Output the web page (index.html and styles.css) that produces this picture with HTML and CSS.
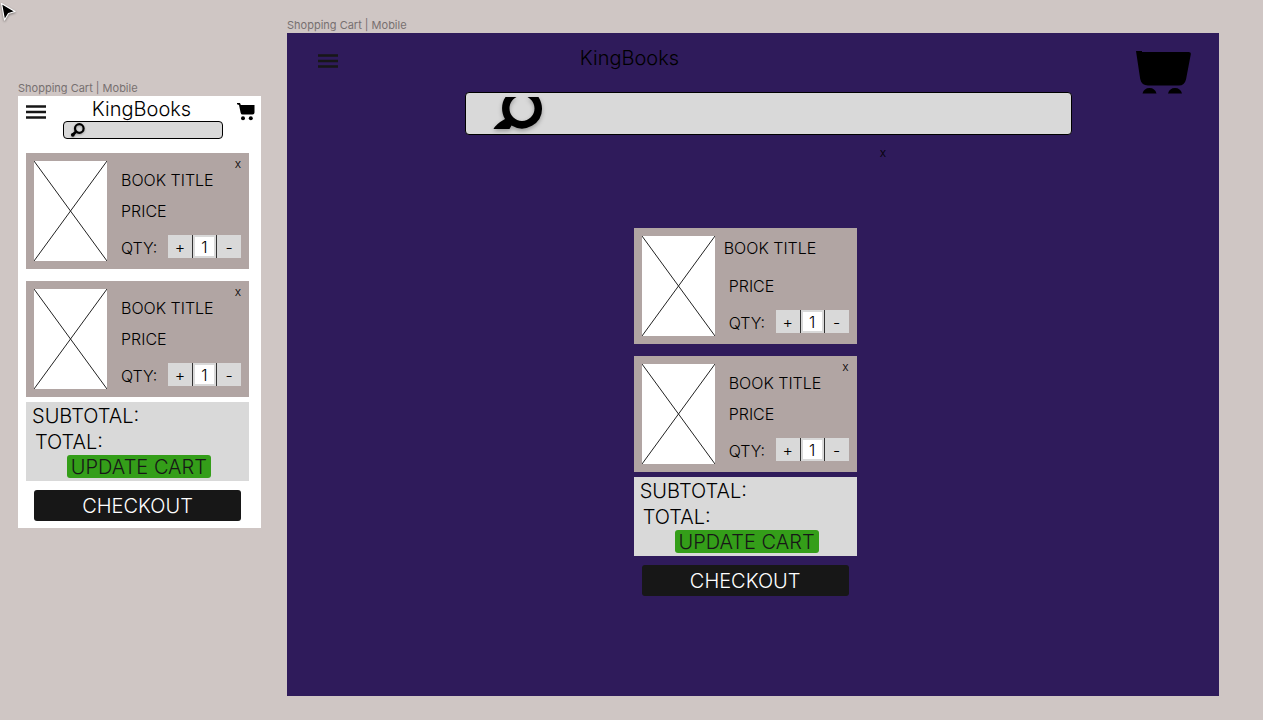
FILE: index.html
```html
<!DOCTYPE html>
<html lang="en">
<head>
<meta charset="utf-8">
<meta name="viewport" content="width=device-width, initial-scale=1">
<title>Shopping Cart</title>
<link rel="stylesheet" href="styles.css">
</head>
<body>
<svg class="pointer" viewBox="0 0 18 22" aria-hidden="true"><path d="M1.5 3.5 15 11.5 8.5 13.5 4.500 20Z" fill="#000" stroke="#fff" stroke-width="1.200" stroke-linejoin="round"/></svg>
<main class="canvas">
  <section class="board board-mobile">
    <h2 class="board-label">Shopping Cart | Mobile</h2>
    <div class="frame">
      <header class="top">
        <button class="icon-button" aria-label="Menu"><svg class="menu-icon" viewBox="0 0 20 24"><path d="M0 9.500h20M0 15h20M0 20.500h20" stroke="#171717" stroke-width="2.400"/></svg></button>
        <h1 class="brand">KingBooks</h1>
        <button class="icon-button" aria-label="Cart"><svg class="cart-icon" viewBox="0 0 18 24"><path d="M0 6h3l.8 2H17.500v7.500q0 2-2 2H5.500q-1.500 0-1.800-1.500L2 8 0 7.200Z"/><circle cx="6" cy="21.200" r="2"/><circle cx="13.800" cy="21.200" r="2"/></svg></button>
      </header>
      <form class="search" role="search">
        <label for="search-mobile"><svg class="search-icon" viewBox="0 0 16 16"><circle cx="9.300" cy="6.500" r="4.300" fill="none" stroke="#000" stroke-width="2.200"/><path d="M6 9.800 3 12.500" stroke="#000" stroke-width="2.600"/><circle cx="2.800" cy="12.800" r="1.900"/></svg></label>
        <input id="search-mobile" type="search" aria-label="Search books">
      </form>
      <div class="cart">
        <article class="item">
          <svg class="cover" viewBox="0 0 73 100" preserveAspectRatio="none" role="img" aria-label="Book cover"><path d="M0 0 73 100M73 0 0 100"/></svg>
          <div class="details">
            <h3>BOOK TITLE</h3>
            <p>PRICE</p>
            <div class="quantity"><label for="qty-1">QTY:</label><div class="stepper"><button aria-label="Add one">+</button><input id="qty-1" type="text" inputmode="numeric" value="1"><button aria-label="Remove one">-</button></div></div>
          </div>
          <button class="remove" aria-label="Remove book">x</button>
        </article>
        <article class="item">
          <svg class="cover" viewBox="0 0 73 100" preserveAspectRatio="none" role="img" aria-label="Book cover"><path d="M0 0 73 100M73 0 0 100"/></svg>
          <div class="details">
            <h3>BOOK TITLE</h3>
            <p>PRICE</p>
            <div class="quantity"><label for="qty-2">QTY:</label><div class="stepper"><button aria-label="Add one">+</button><input id="qty-2" type="text" inputmode="numeric" value="1"><button aria-label="Remove one">-</button></div></div>
          </div>
          <button class="remove" aria-label="Remove book">x</button>
        </article>
        <section class="summary">
          <p class="subtotal">SUBTOTAL:</p>
          <p class="total">TOTAL:</p>
          <button class="update">UPDATE CART</button>
        </section>
        <button class="checkout">CHECKOUT</button>
      </div>
    </div>
  </section>

  <section class="board board-desktop">
    <h2 class="board-label">Shopping Cart | Mobile</h2>
    <div class="frame">
      <header class="top">
        <button class="icon-button" aria-label="Menu"><svg class="menu-icon" viewBox="0 0 20 24"><path d="M0 9.500h20M0 15h20M0 20.500h20" stroke="#171717" stroke-width="2.400"/></svg></button>
        <h1 class="brand">KingBooks</h1>
        <button class="icon-button" aria-label="Cart"><svg class="cart-icon" viewBox="0 0 55 48"><path d="M0 5h6v1H52.500q2.500 0 2.300 2.300L50 33.500q-1.500 6-7 6H12q-6.500 0-7.800-6.500Z"/><path d="M6.500 47.500q1.500-5.500 7-5.500t7 5.500ZM32 47.500q1.500-5.500 7-5.500t7 5.500Z"/></svg></button>
      </header>
      <form class="search" role="search">
        <label for="search-desktop"><svg class="search-icon" viewBox="0 0 52 38"><path fill-rule="evenodd" d="M12.500 2H23.500C18 5 16.500 10 16.500 13.500a12.500 12.500 0 0 0 25 0C41.500 9 39.500 5 34.500 2H45.500C48 6 49 10 49 13.500A20 19.500 0 0 1 18.500 30.500L16.500 34H0.500Q3 29 12 24C8 17 8 8.500 12.500 2Z"/></svg></label>
        <input id="search-desktop" type="search" aria-label="Search books">
      </form>
      <div class="clear-row"><button class="clear" aria-label="Remove book">x</button></div>
      <div class="cart">
        <article class="item item-raised">
          <svg class="cover" viewBox="0 0 73 100" preserveAspectRatio="none" role="img" aria-label="Book cover"><path d="M0 0 73 100M73 0 0 100"/></svg>
          <div class="details">
            <h3>BOOK TITLE</h3>
            <p>PRICE</p>
            <div class="quantity"><label for="qty-3">QTY:</label><div class="stepper"><button aria-label="Add one">+</button><input id="qty-3" type="text" inputmode="numeric" value="1"><button aria-label="Remove one">-</button></div></div>
          </div>
        </article>
        <article class="item">
          <svg class="cover" viewBox="0 0 73 100" preserveAspectRatio="none" role="img" aria-label="Book cover"><path d="M0 0 73 100M73 0 0 100"/></svg>
          <div class="details">
            <h3>BOOK TITLE</h3>
            <p>PRICE</p>
            <div class="quantity"><label for="qty-4">QTY:</label><div class="stepper"><button aria-label="Add one">+</button><input id="qty-4" type="text" inputmode="numeric" value="1"><button aria-label="Remove one">-</button></div></div>
          </div>
          <button class="remove" aria-label="Remove book">x</button>
        </article>
        <section class="summary">
          <p class="subtotal">SUBTOTAL:</p>
          <p class="total">TOTAL:</p>
          <button class="update">UPDATE CART</button>
        </section>
        <button class="checkout">CHECKOUT</button>
      </div>
    </div>
  </section>
</main>
</body>
</html>
```
FILE: styles.css
```css
* { box-sizing: border-box; }

body {
  margin: 0;
  background: #cfc6c4;
  color: #000;
  font-family: Inter, "Liberation Sans", sans-serif;
  font-size: 15px;
  font-weight: 350;
}

h1, h2, h3, p { margin: 0; font-weight: inherit; }

button, input {
  margin: 0;
  padding: 0;
  border: 0;
  background: none;
  color: inherit;
  font: inherit;
}

svg { display: block; }

.pointer {
  position: absolute;
  top: 0;
  left: 0;
  width: 18px;
  height: 22px;
  filter: drop-shadow(0 1px 1px rgba(0, 0, 0, 0.4));
}

.canvas {
  display: grid;
  grid-template-columns: 243px 1fr;
  align-items: start;
  gap: 26px;
  padding: 17px 44px 24px 18px;
}

.board-mobile { padding-top: 63px; }

.board-label {
  color: #777070;
  font-size: 11px;
  font-weight: 400;
  line-height: 16px;
}

.frame { background: #fff; }

.board-mobile .frame { padding: 1px 0 7px; }

.board-desktop .frame {
  min-height: 663px;
  background: #2f1b5b;
}

.top {
  display: grid;
  grid-template-columns: 20px 1fr auto;
  align-items: start;
  padding: 0 6px 0 8px;
}

.board-desktop .top {
  height: 59px;
  padding: 13px 28px 0 31px;
}

.brand {
  font-size: 20px;
  line-height: 24px;
  text-align: center;
}

.board-desktop .brand {
  padding-left: 30.3%;
  text-align: left;
}

.menu-icon { width: 20px; height: 24px; }
.cart-icon { width: 18px; height: 24px; }
.board-desktop .cart-icon { width: 55px; height: 48px; }

.search {
  display: flex;
  align-items: center;
  height: 18px;
  margin: 0 38px 0 45px;
  padding-left: 6px;
  border: 1px solid #000;
  border-radius: 4px;
  background: #d9d9d9;
}

.board-desktop .search {
  height: 43px;
  margin: 0 15.8% 0 19.1%;
  padding-left: 27px;
}

.search input {
  flex: 1;
  min-width: 0;
  height: 100%;
  outline: 0;
}

.search-icon {
  width: 16px;
  height: 16px;
  filter: drop-shadow(0 1px 1px rgba(0, 0, 0, 0.3));
}

.board-desktop .search-icon {
  width: 52px;
  height: 38px;
  filter: drop-shadow(0 2px 2px rgba(0, 0, 0, 0.3));
}

.clear-row {
  display: flex;
  align-items: start;
  height: 93px;
  padding: 10px 0 0 63.6%;
}

.remove, .clear {
  font-size: 12px;
  line-height: 16px;
}

.cart {
  width: 223px;
  margin: 14px 0 0 8px;
}

.board-desktop .cart { margin: 0 0 0 37.2%; }

.item {
  position: relative;
  display: grid;
  grid-template-columns: 73px 1fr;
  gap: 14px;
  padding: 8px;
  background: #b1a5a3;
}

.item + .item { margin-top: 12px; }

.remove {
  position: absolute;
  top: 3px;
  right: 8px;
}

.cover {
  width: 100%;
  height: 100px;
  background: #fff;
  stroke: #222;
  stroke-width: 1;
}

.details {
  display: grid;
  grid-template-rows: 31px 34px 23px;
  align-content: start;
  padding-top: 9px;
  font-size: 16px;
  line-height: 20px;
}

.details h3 { font-size: 16px; }

.item-raised .details {
  grid-template-rows: 38px 34px 23px;
  padding-top: 2px;
}

.item-raised h3 { margin-left: -5px; }

.quantity {
  display: flex;
  align-items: end;
  justify-content: space-between;
}

.stepper {
  display: grid;
  grid-template-columns: 24px 25px 24px;
  height: 23px;
  background: #d9d9d9;
}

.stepper input {
  width: 100%;
  border: solid #333;
  border-width: 0 1px;
  background: #fff;
  box-shadow: inset 0 0 0 2px #d9d9d9;
  text-align: center;
}

.summary {
  margin-top: 5px;
  padding: 1px 6px 3px;
  background: #d9d9d9;
  font-size: 20px;
  line-height: 26px;
}

.total { padding-left: 3px; }

.update {
  display: block;
  height: 23px;
  margin: 0 32px 0 auto;
  padding: 0 4px;
  border-radius: 3px;
  background: #349e19;
  color: #171717;
  line-height: 25px;
}

.checkout {
  display: block;
  width: 207px;
  height: 31px;
  margin: 9px auto 0;
  border-radius: 3px;
  background: #171717;
  color: #fff;
  font-size: 20px;
}
```
